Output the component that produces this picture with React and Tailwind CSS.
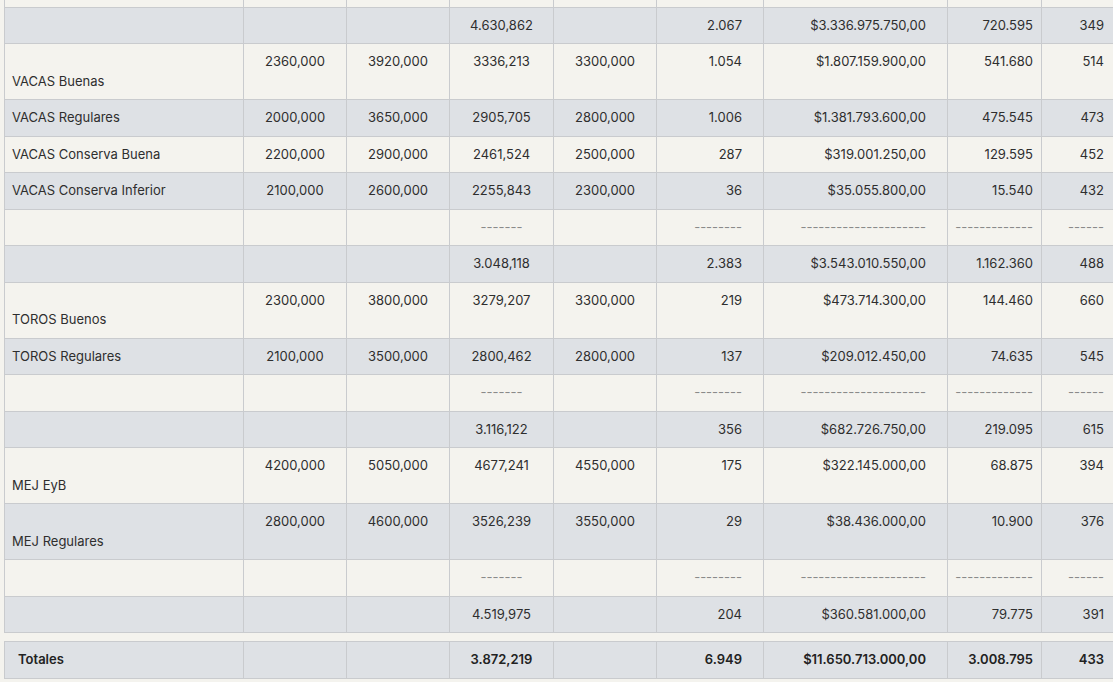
const rows = [
  { cells: ['', '', '', '', '', '', '', '', ''] },
  { cells: ['', '', '', '4.630,862', '', '2.067', '$3.336.975.750,00', '720.595', '349'] },
  { tall: true, cells: ['VACAS Buenas', '2360,000', '3920,000', '3336,213', '3300,000', '1.054', '$1.807.159.900,00', '541.680', '514'] },
  { cells: ['VACAS Regulares', '2000,000', '3650,000', '2905,705', '2800,000', '1.006', '$1.381.793.600,00', '475.545', '473'] },
  { cells: ['VACAS Conserva Buena', '2200,000', '2900,000', '2461,524', '2500,000', '287', '$319.001.250,00', '129.595', '452'] },
  { cells: ['VACAS Conserva Inferior', '2100,000', '2600,000', '2255,843', '2300,000', '36', '$35.055.800,00', '15.540', '432'] },
  { dashes: true },
  { cells: ['', '', '', '3.048,118', '', '2.383', '$3.543.010.550,00', '1.162.360', '488'] },
  { tall: true, cells: ['TOROS Buenos', '2300,000', '3800,000', '3279,207', '3300,000', '219', '$473.714.300,00', '144.460', '660'] },
  { cells: ['TOROS Regulares', '2100,000', '3500,000', '2800,462', '2800,000', '137', '$209.012.450,00', '74.635', '545'] },
  { dashes: true },
  { cells: ['', '', '', '3.116,122', '', '356', '$682.726.750,00', '219.095', '615'] },
  { tall: true, cells: ['MEJ EyB', '4200,000', '5050,000', '4677,241', '4550,000', '175', '$322.145.000,00', '68.875', '394'] },
  { tall: true, cells: ['MEJ Regulares', '2800,000', '4600,000', '3526,239', '3550,000', '29', '$38.436.000,00', '10.900', '376'] },
  { dashes: true },
  { cells: ['', '', '', '4.519,975', '', '204', '$360.581.000,00', '79.775', '391'] },
]

const dashCells = ['', '', '', '-------', '', '--------', '---------------------', '-------------', '------']
const totals = ['Totales', '', '', '3.872,219', '', '6.949', '$11.650.713.000,00', '3.008.795', '433']

// alignment per column
const align = [
  'text-left pl-[7px] pr-2',
  'text-center px-2',
  'text-center px-2',
  'text-center px-2',
  'text-center px-2',
  'text-right pl-2 pr-[21px]',
  'text-right pl-2 pr-[21px]',
  'text-right pl-1 pr-[8px]',
  'text-right pl-1 pr-[15px]',
]

function Cols() {
  return (
    <colgroup>
      <col className="w-[239px]" />
      <col className="w-[103px]" />
      <col className="w-[103px]" />
      <col className="w-[104px]" />
      <col className="w-[103px]" />
      <col className="w-[107px]" />
      <col className="w-[184px]" />
      <col className="w-[94px]" />
      <col className="w-[78px]" />
    </colgroup>
  )
}

function Row({ row, index }) {
  const bg = index % 2 === 0 ? 'bg-[#f4f3ee]' : 'bg-[#dee1e5]'
  const cells = row.dashes ? dashCells : row.cells
  return (
    <tr className={bg}>
      {cells.map((c, i) => (
        <td
          key={i}
          className={`whitespace-nowrap overflow-hidden border border-[#c9cbce] py-2 align-top ${align[i]} ${row.dashes ? 'text-[#8a8a8a]' : 'text-[#2e2e2e]'}`}
        >
          {i === 0 && row.tall ? (
            <>
              <span className="block">&nbsp;</span>
              <span className="block">{c}</span>
            </>
          ) : (
            c || '\u00a0'
          )}
        </td>
      ))}
    </tr>
  )
}

export default function App() {
  return (
    <div className="h-[682px] w-full overflow-hidden bg-[#f4f3ee] pl-[4px] text-[13px] leading-[1.5]" style={{ fontFamily: 'Inter, "Noto Sans", sans-serif' }}>
      <table className="-mt-[30px] w-[1116px] table-fixed border-collapse">
        <Cols />
        <tbody>
          {rows.map((r, i) => (
            <Row key={i} row={r} index={i} />
          ))}
        </tbody>
      </table>
      <table className="mt-[8px] w-[1116px] table-fixed border-collapse">
        <Cols />
        <tbody>
          <tr className="bg-[#dee1e5] font-semibold text-[#222]">
            {totals.map((c, i) => (
              <td key={i} className={`whitespace-nowrap overflow-hidden border border-[#c9cbce] py-2 ${i === 0 ? 'text-left pl-[13px] pr-2' : align[i]}`}>
                {c || '\u00a0'}
              </td>
            ))}
          </tr>
        </tbody>
      </table>
    </div>
  )
}
